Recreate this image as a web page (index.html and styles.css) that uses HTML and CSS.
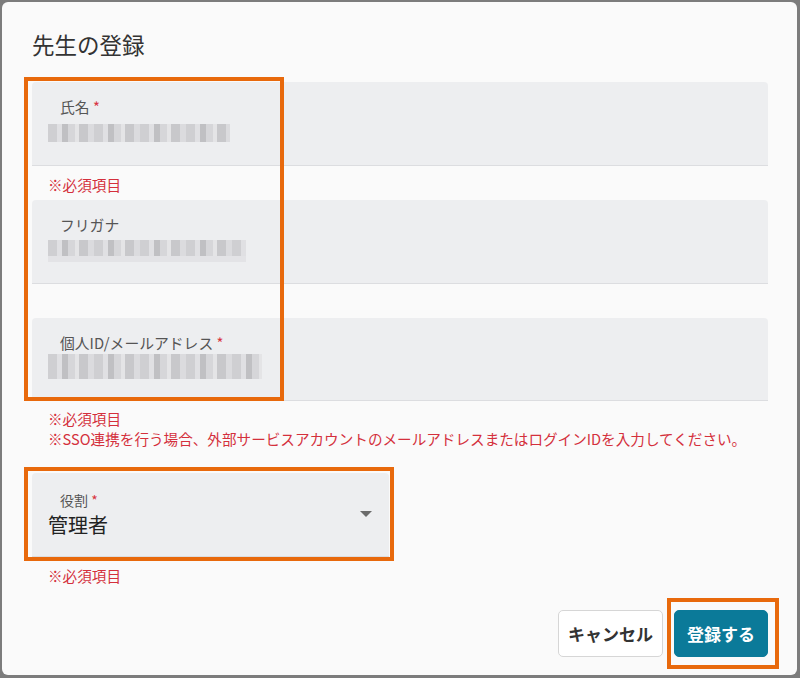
FILE: index.html
```html
<!DOCTYPE html>
<html lang="ja">
<head>
<meta charset="utf-8">
<title>先生の登録</title>
<link rel="stylesheet" href="styles.css">
</head>
<body>
<div class="dialog">
  <h1 class="title">先生の登録</h1>

  <div class="field">
    <div class="label">氏名 <span class="req">*</span></div>
    <div class="mosaic m1"></div>
  </div>
  <div class="helper h1">※必須項目</div>

  <div class="field">
    <div class="label">フリガナ</div>
    <div class="mosaic m2"></div>
    <div class="mosaic m2b"></div>
  </div>

  <div class="field f3">
    <div class="label">個人ID/メールアドレス <span class="req">*</span></div>
    <div class="mosaic m3"></div>
  </div>
  <div class="helper h3">
    <div class="line">※必須項目</div>
    <div class="line">※SSO連携を行う場合、外部サービスアカウントのメールアドレスまたはログインIDを入力してください。</div>
  </div>

  <div class="select">
    <div class="select-text">
      <div class="label small">役割 <span class="req">*</span></div>
      <div class="value">管理者</div>
    </div>
    <span class="arrow"></span>
  </div>
  <div class="helper h4">※必須項目</div>

  <div class="actions">
    <button class="btn cancel">キャンセル</button>
    <button class="btn submit">登録する</button>
  </div>
</div>

<div class="mark mark1"></div>
<div class="mark mark2"></div>
<div class="mark mark3"></div>
</body>
</html>
```

FILE: styles.css
```css
html, body {
  margin: 0;
  padding: 0;
}
body {
  width: 800px;
  height: 678px;
  background: #7c7c7c;
  font-family: "Noto Sans CJK JP", "Noto Sans", sans-serif;
  position: relative;
  overflow: hidden;
}
.dialog {
  box-sizing: border-box;
  margin: 2px 3px 0 2px;
  height: 673px;
  background: #fafafa;
  border-radius: 6px;
  padding: 28px 29px 0 30px;
}
.title {
  margin: 0 0 24px 0;
  font-size: 22.5px;
  line-height: 28px;
  font-weight: 400;
  color: #333;
}
.field {
  box-sizing: border-box;
  height: 84px;
  background: #edeef0;
  border-radius: 4px 4px 0 0;
  border-bottom: 1px solid #dcdde0;
  padding: 15px 16px 0 16px;
}
.field.f3 {
  height: 83px;
  margin-top: 34px;
}
.label {
  font-size: 14.8px;
  line-height: 20px;
  color: #555;
  padding-left: 12px;
}
.label.small {
  font-size: 14px;
  line-height: 18px;
}
.req {
  color: #d8333f;
}
.mosaic {
  height: 18px;
  margin-top: 7px;
  background:
    repeating-linear-gradient(90deg,
      #cfcfd2 0 9px, #e0e0e3 9px 14px, #c0c0c3 14px 20px, #d6d6d9 20px 27px,
      #e4e4e6 27px 31px, #c8c8cb 31px 40px, #dbdbde 40px 46px);
}
.m1 { width: 182px; }
.m2 { width: 198px; height: 16px; margin-top: 5px; }
.m2b { width: 198px; height: 6px; margin-top: 0; background: #e3e3e6; }
.m3 { width: 214px; height: 25px; margin-top: 1px; }
.helper {
  font-size: 14.6px;
  line-height: 17px;
  color: #d4303c;
  padding-left: 16px;
  white-space: nowrap;
}
.h3 {
  line-height: 20px;
}
.h1 { margin: 10px 0 7px 0; }
.h3 { margin: 8px 0 24px 0; }
.h4 { margin: 10px 0 26px 0; }
.select {
  box-sizing: border-box;
  width: 357px;
  height: 84px;
  background: #edeef0;
  border-radius: 4px 4px 0 0;
  border-bottom: 1px solid #dcdde0;
  padding: 18px 17px 0 16px;
  display: flex;
  justify-content: space-between;
  align-items: flex-start;
}
.value {
  font-size: 20px;
  line-height: 24px;
  color: #222;
  margin-top: 4px;
}
.arrow {
  margin-top: 20px;
  width: 0;
  height: 0;
  border-left: 6px solid transparent;
  border-right: 6px solid transparent;
  border-top: 6px solid #6b6b6b;
}
.actions {
  display: flex;
  justify-content: flex-end;
  gap: 11px;
}
.btn {
  height: 47px;
  font-family: "Noto Sans CJK JP", "Noto Sans", sans-serif;
  font-size: 17px;
  font-weight: 600;
  border-radius: 5px;
  cursor: pointer;
}
.cancel {
  padding: 0 9px;
  background: #fff;
  border: 1px solid #d6d6d6;
  color: #333;
}
.submit {
  padding: 0 12px;
  background: #0b7a99;
  border: 1px solid #0b7a99;
  color: #fff;
}
.mark {
  position: absolute;
  box-sizing: border-box;
  border: 4px solid #e8690c;
}
.mark1 { left: 24px; top: 77px; width: 260px; height: 324px; }
.mark2 { left: 24px; top: 467px; width: 370px; height: 94px; }
.mark3 { left: 667px; top: 598px; width: 112px; height: 71px; }
```
